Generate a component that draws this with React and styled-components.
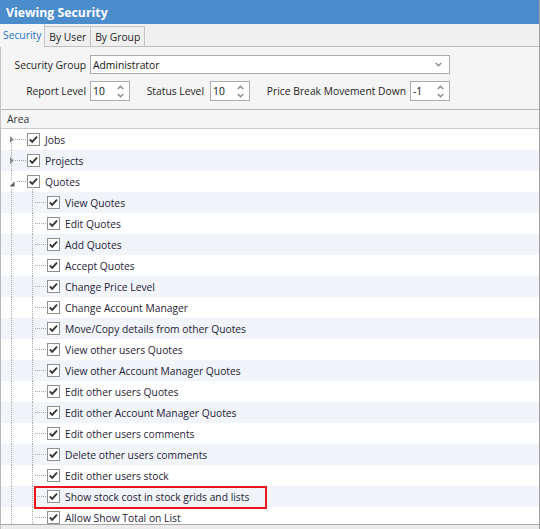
import React from 'react';
import styled, { createGlobalStyle } from 'styled-components';

const Global = createGlobalStyle`
  html, body { margin: 0; padding: 0; background: #f0f0f0; }
  body { font-family: "Open Sans", "Noto Sans", sans-serif; font-size: 10.3px; color: #1e1e1e; }
  #root { width: 540px; height: 529px; }
`;

const Window = styled.div`
  width: 540px;
  height: 529px;
  box-sizing: border-box;
  border-right: 1px solid #a0a0a0;
  display: flex;
  flex-direction: column;
  overflow: hidden;
  background: #f0f0f0;
`;

const TitleBar = styled.div`
  height: 24px;
  flex: none;
  background: #4b8dcc;
  color: #ffffff;
  font-weight: 700;
  font-size: 12.3px;
  display: flex;
  align-items: center;
  padding-left: 6px;
`;

const Body = styled.div`
  flex: 1;
  display: flex;
  flex-direction: column;
  border-left: 1px solid #c4c4c4;
  min-height: 0;
`;

const TabStrip = styled.div`
  height: 23px;
  flex: none;
  display: flex;
  align-items: flex-end;
  background: #f0f0f0;
  margin-left: -1px;
`;

const Tab = styled.div`
  box-sizing: border-box;
  display: flex;
  align-items: center;
  height: ${p => (p.$active ? '23px' : '21px')};
  padding: 0 ${p => (p.$active ? '3px 0 3px' : '4px')};
  background: ${p => (p.$active ? '#f5f5f5' : '#f0f0f0')};
  color: ${p => (p.$active ? '#1d72c4' : '#222')};
  border-right: 1px solid #c6c6c6;
  border-top: ${p => (p.$active ? 'none' : '1px solid #c6c6c6')};
  border-bottom: ${p => (p.$active ? 'none' : '1px solid #c0c0c0')};
  padding-bottom: ${p => (p.$active ? '1px' : '0')};
`;

const TabFiller = styled.div`
  flex: 1;
  height: 1px;
  background: #c0c0c0;
`;

const Panel = styled.div`
  flex: none;
  background: #f5f5f5;
  padding: 8px 0;
  border-bottom: 1px solid #b8b8b8;
  display: flex;
  flex-direction: column;
  gap: 7px;
`;

const FormRow = styled.div`
  display: flex;
  align-items: center;
  height: ${p => p.$h}px;
`;

const Label = styled.div`
  width: ${p => p.$w}px;
  margin-left: ${p => p.$ml || 0}px;
  margin-right: ${p => p.$mr || 4}px;
  text-align: right;
  white-space: nowrap;
  color: #1e1e1e;
`;

const Field = styled.div`
  box-sizing: border-box;
  width: ${p => p.$w}px;
  height: 100%;
  background: #ffffff;
  border: 1px solid #ababab;
  display: flex;
  align-items: center;
  justify-content: space-between;
  padding: 0 ${p => p.$pr || 6}px 0 2px;
  color: #111;
`;

const SpinArrows = styled.svg`
  display: block;
`;

const AreaHeader = styled.div`
  flex: none;
  height: 18px;
  box-sizing: content-box;
  border-bottom: 1px solid #cbcbcb;
  background: #f5f5f5;
  display: flex;
  align-items: center;
  padding-left: 6px;
  color: #333;
`;

const Tree = styled.div`
  flex: none;
  height: 395px;
  background: #ffffff;
  border-bottom: 1px solid #a8a8a8;
  overflow: hidden;
  margin-left: -1px;
  border-left: 1px solid #b8b8b8;
`;

const Row = styled.div`
  position: relative;
  height: 21px;
  display: flex;
  align-items: center;
  background: ${p => (p.$alt ? '#f1f4f9' : '#ffffff')};
  color: #1f2236;
  white-space: nowrap;
`;

const Gutter = styled.svg`
  display: block;
  flex: none;
  overflow: visible;
  position: relative;
  z-index: ${p => (p.$over ? 1 : 'auto')};
`;

const Check = styled.svg`
  display: block;
  flex: none;
`;

const RowText = styled.span`
  margin-left: 5px;
`;

const Highlight = styled.div`
  position: absolute;
  z-index: 2;
  left: 33px;
  top: 0;
  width: 233px;
  height: 23px;
  box-sizing: border-box;
  border: 2px solid #e8141b;
  pointer-events: none;
`;

const Footer = styled.div`
  flex: 1;
  background: #ececec;
`;

const DOT = '#a9a9a9';

function Chevron({ up }) {
  return up ? (
    <polyline points="0.8,4 3.5,1.2 6.2,4" fill="none" stroke="#8a8a8a" strokeWidth="1.4" />
  ) : (
    <polyline points="0.8,1 3.5,3.8 6.2,1" fill="none" stroke="#8a8a8a" strokeWidth="1.4" />
  );
}

function Spin({ value, w }) {
  return (
    <Field $w={w} $pr={5}>
      <span>{value}</span>
      <SpinArrows width="7" height="13" viewBox="0 0 7 13">
        <Chevron up />
        <g transform="translate(0,8)"><Chevron /></g>
      </SpinArrows>
    </Field>
  );
}

function CheckBox() {
  return (
    <Check width="13" height="13" viewBox="0 0 13 13">
      <rect x="0.5" y="0.5" width="12" height="12" fill="#fff" stroke="#909090" />
      <polyline points="2.8,6.4 5.2,8.9 10,3.6" fill="none" stroke="#333" strokeWidth="1.8" />
    </Check>
  );
}

function RootGutter({ state, first }) {
  return (
    <Gutter width="26" height="21" viewBox="0 0 26 21">
      <line x1="10.5" y1={first ? 14 : 0} x2="10.5" y2="21" stroke={DOT} strokeDasharray="1 1" />
      <line x1="14" y1="10.5" x2="25" y2="10.5" stroke={DOT} strokeDasharray="1 1" />
      {state === 'collapsed' && <polygon points="9,7 13,10.5 9,14" fill="#8c8c8c" />}
    </Gutter>
  );
}

function QuoteGutter() {
  return (
    <Gutter width="26" height="21" viewBox="0 0 26 21" $over>
      <line x1="10.5" y1="0" x2="10.5" y2="21" stroke={DOT} strokeDasharray="1 1" />
      <line x1="14" y1="10.5" x2="25" y2="10.5" stroke={DOT} strokeDasharray="1 1" />
      <rect x="8" y="9" width="7" height="8" fill="#fff" />
      <polygon points="13.5,10.5 13.5,15.5 8.5,15.5" fill="#5a5a5a" />
      <line x1="31.5" y1="18" x2="31.5" y2="21" stroke={DOT} strokeDasharray="1 1" />
    </Gutter>
  );
}

function ChildGutter() {
  return (
    <Gutter width="46" height="21" viewBox="0 0 46 21">
      <line x1="10.5" y1="0" x2="10.5" y2="21" stroke={DOT} strokeDasharray="1 1" />
      <line x1="31.5" y1="0" x2="31.5" y2="21" stroke={DOT} strokeDasharray="1 1" />
      <line x1="34" y1="10.5" x2="45" y2="10.5" stroke={DOT} strokeDasharray="1 1" />
    </Gutter>
  );
}

const QuoteChildren = [
  'View Quotes',
  'Edit Quotes',
  'Add Quotes',
  'Accept Quotes',
  'Change Price Level',
  'Change Account Manager',
  'Move/Copy details from other Quotes',
  'View other users Quotes',
  'View other Account Manager Quotes',
  'Edit other users Quotes',
  'Edit other Account Manager Quotes',
  'Edit other users comments',
  'Delete other users comments',
  'Edit other users stock',
  'Show stock cost in stock grids and lists',
  'Allow Show Total on List',
];

const rows = [
  { label: 'Jobs', kind: 'root', first: true },
  { label: 'Projects', kind: 'root' },
  { label: 'Quotes', kind: 'expanded' },
  ...QuoteChildren.map(label => ({ label, kind: 'child' })),
];

function RowGutter({ row }) {
  if (row.kind === 'expanded') return <QuoteGutter />;
  if (row.kind === 'root') return <RootGutter state="collapsed" first={row.first} />;
  return <ChildGutter />;
}

export default function App() {
  return (
    <>
      <Global />
      <Window>
        <TitleBar>Viewing Security</TitleBar>
        <Body>
          <TabStrip>
            <Tab $active>Security</Tab>
            <Tab>By User</Tab>
            <Tab>By Group</Tab>
            <TabFiller />
          </TabStrip>
          <Panel>
            <FormRow $h={19}>
              <Label $w={85}>Security Group</Label>
              <Field $w={360} $pr={7}>
                <span>Administrator</span>
                <SpinArrows width="7" height="5" viewBox="0 0 7 5">
                  <Chevron />
                </SpinArrows>
              </Field>
            </FormRow>
            <FormRow $h={20}>
              <Label $w={85}>Report Level</Label>
              <Spin value="10" w={40} />
              <Label $w={60} $ml={14} $mr={6}>Status Level</Label>
              <Spin value="10" w={40} />
              <Label $w={150} $ml={6} $mr={4}>Price Break Movement Down</Label>
              <Spin value="-1" w={40} />
            </FormRow>
          </Panel>
          <AreaHeader>Area</AreaHeader>
          <Tree>
            {rows.map((r, i) => (
              <Row key={r.label} $alt={i % 2 === 1}>
                <RowGutter row={r} />
                <CheckBox />
                <RowText>{r.label}</RowText>
                {r.label === 'Show stock cost in stock grids and lists' && <Highlight />}
              </Row>
            ))}
          </Tree>
          <Footer />
        </Body>
      </Window>
    </>
  );
}
